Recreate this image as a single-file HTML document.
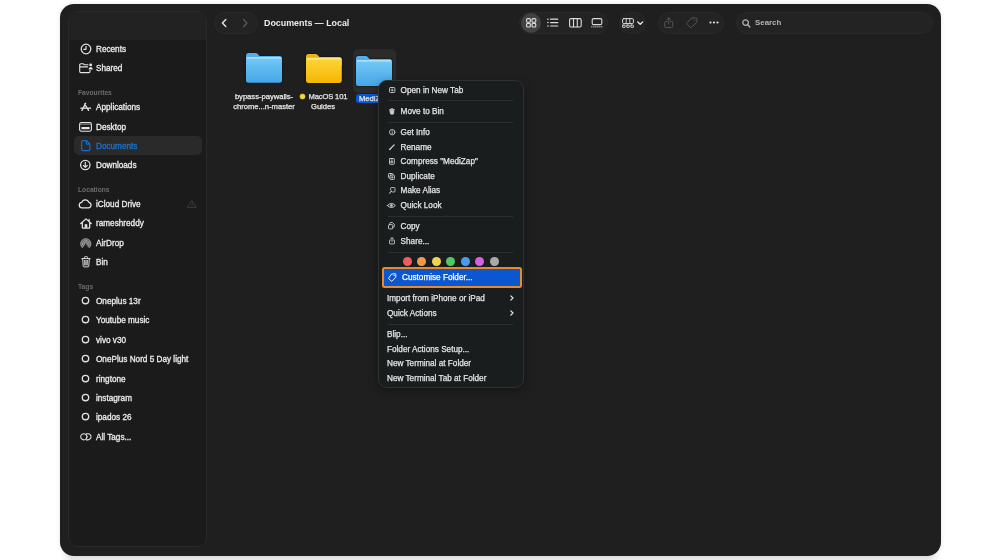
<!DOCTYPE html>
<html><head><meta charset="utf-8">
<style>
*{box-sizing:border-box;margin:0;padding:0}
html,body{width:1001px;height:560px;overflow:hidden;background:#fff;font-family:"Liberation Sans",sans-serif;}
body{position:relative}
.botband{position:absolute;left:60px;top:548px;width:881px;height:12px;background:linear-gradient(90deg,#fff 0,#e9e9e9 12px,#e9e9e9 869px,#fff 881px)}
.win{will-change:transform;position:absolute;left:60px;top:4px;width:881px;height:551.6px;background:#1f1f1f;border-radius:14px;box-shadow:0 0 5px rgba(0,0,0,.10)}
.side{position:absolute;left:8px;top:7px;width:139px;height:536.4px;background:#1b1b1b;border-radius:9px;border:1px solid #292929;overflow:hidden}
.sidehead{position:absolute;left:0;top:0;width:100%;height:28px;background:#222}
.row{position:absolute;left:27px;font-size:8.2px;color:#e8e8e8;white-space:nowrap;line-height:10px;height:10px;-webkit-text-stroke:.32px}
.lab{position:absolute;left:9px;font-size:6.7px;color:#6c6c6c;font-weight:bold;white-space:nowrap;line-height:8px}
.ico{position:absolute;left:10px;width:12px;height:12px}
.sel{position:absolute;left:5px;top:124.4px;width:127.6px;height:18.6px;border-radius:5px;background:#2a2a2a}
svg{display:block;overflow:visible}
.tb{position:absolute;background:#232323;border:1px solid #292929;border-radius:11px;height:22px;top:8px}
.title{position:absolute;left:204px;top:13px;font-size:8.9px;font-weight:bold;color:#ececec;line-height:12px;white-space:nowrap}
.flabel{position:absolute;font-size:7.6px;color:#e8e8e8;line-height:9.7px;text-align:center;white-space:nowrap;-webkit-text-stroke:.25px}
.menu{position:absolute;left:318px;top:76px;width:146px;height:307.6px;background:#1a1d1d;border:1px solid #2f3232;border-radius:9px;box-shadow:0 3px 10px rgba(0,0,0,.35)}
.mi{position:absolute;left:21.6px;font-size:8.2px;color:#e4e4e4;line-height:10px;height:10px;white-space:nowrap;-webkit-text-stroke:.25px}
.mi.ni{left:8px}
.msep{position:absolute;left:9px;width:125px;height:1px;background:#2b2f2f}
.mic{position:absolute;left:9px;width:9px;height:9px}
.dot{position:absolute;top:176.4px;width:8.8px;height:8.8px;border-radius:50%}
.chev{position:absolute;left:130px;width:5px;height:7px}

</style></head><body>
<div class="botband"></div>
<div class="win">
 <div class="side">
  <div class="sidehead"></div>
  <div class="sel"></div>
  <svg style="position:absolute;left:10.6px;top:30.80px" width="12" height="12" viewBox="0 0 12 12" fill="none" stroke="#e0e0e0" stroke-width="1" stroke-linecap="round" stroke-linejoin="round"><circle cx="6" cy="6" r="4.8" stroke-width="1.25"/><path d="M6 3.2V6.3H3.8" stroke-width="1.15"/></svg>
  <svg style="position:absolute;left:9.6px;top:51.10px" width="14" height="10.4" viewBox="0 0 14 10.4" fill="none" stroke="#e4e4e4" stroke-width="1.1" stroke-linecap="round" stroke-linejoin="round"><path d="M.7 2Q.7 .8 1.9 .8H4.4L5.4 1.8H9M.7 2V8.4Q.7 9.6 1.9 9.6H9.8Q11 9.6 11 8.4V7.4M.8 3.9H8.6"/><circle cx="11.7" cy="1.9" r="1.45" fill="#e4e4e4" stroke="none"/><path d="M9.6 6.6Q9.6 4 11.7 4Q13.8 4 13.8 6.6Z" fill="#e4e4e4" stroke="none"/></svg>
  <svg style="position:absolute;left:10.80px;top:90.20px" width="12" height="10" viewBox="0 0 12 10" fill="none" stroke="#e6e6e6" stroke-width="1.3" stroke-linecap="round" stroke-linejoin="round"><path d="M5.6 1.3L2 8.4M4.6 2L8.6 8.4M.9 6.2H6.6M8.4 6.2H10.6"/></svg>
  <svg style="position:absolute;left:10.10px;top:110.00px" width="13" height="9.8" viewBox="0 0 13 9.8" fill="none" stroke="#e4e4e4" stroke-width="1.1" stroke-linecap="round" stroke-linejoin="round"><rect x=".6" y=".6" width="11.8" height="8.6" rx="1.6"/><path d="M.9 2.4H12.1" stroke-width=".7" stroke="#9a9a9a"/><rect x="2.4" y="4.9" width="8.2" height="2.4" rx=".6" fill="#e4e4e4" stroke="none"/></svg>
  <svg style="position:absolute;left:11.5px;top:128.00px" width="9.6" height="11.4" viewBox="0 0 9.6 11.4" fill="none" stroke="#e0e0e0" stroke-width="1" stroke-linecap="round" stroke-linejoin="round"><path d="M1.8 .7H5.6L8.9 4V9.6Q8.9 10.7 7.8 10.7H1.8Q.7 10.7 .7 9.6V1.8Q.7 .7 1.8 .7ZM5.4 .9V3.2Q5.4 4.2 6.4 4.2H8.7" stroke="#186ec4" stroke-width="1.15"/></svg>
  <svg style="position:absolute;left:10.4px;top:147.00px" width="12" height="12" viewBox="0 0 12 12" fill="none" stroke="#e0e0e0" stroke-width="1" stroke-linecap="round" stroke-linejoin="round"><circle cx="6.3" cy="6" r="4.7" stroke-width="1.3"/><path d="M6.3 3.4V8.2M4.4 6.5L6.3 8.4L8.2 6.5" stroke-width="1.15"/></svg>
  <svg style="position:absolute;left:8.9px;top:186.5px" width="14" height="9.6" viewBox="0 0 14 9.6" fill="none" stroke="#e4e4e4" stroke-width="1.25" stroke-linecap="round" stroke-linejoin="round"><path d="M3.6 8.8H10.4A2.75 2.75 0 0 0 10.8 3.35A3.7 3.7 0 0 0 3.8 3.3A2.77 2.77 0 0 0 3.6 8.8Z"/></svg>
  <svg style="position:absolute;left:10.60px;top:206.20px" width="12" height="10.8" viewBox="0 0 12 10.8" fill="none" stroke="#e4e4e4" stroke-width="1.25" stroke-linecap="round" stroke-linejoin="round"><path d="M.8 5.5L6 .9L11.2 5.5M2.3 4.6V9.4Q2.3 10.1 3 10.1H9Q9.7 10.1 9.7 9.4V4.6M9.1 1.5V3.2"/><rect x="4.7" y="6.2" width="2.6" height="3.6" fill="#e4e4e4" stroke="none"/></svg>
  <svg style="position:absolute;left:10.7px;top:225.8px" width="11.6" height="10.8" viewBox="0 0 11.6 10.8" fill="none" stroke-linecap="round"><path d="M2.6 10.1A5.3 5.3 0 1 1 9 10.1L5.8 5.6Z" fill="#6a6a6a"/><g stroke="#a4a4a4" stroke-width=".8" fill="none"><path d="M2.4 9.8A5.2 5.2 0 1 1 9.2 9.8"/><path d="M3.5 8.4A3.4 3.4 0 1 1 8.1 8.4"/><path d="M4.6 6.9A1.7 1.7 0 1 1 7 6.9"/></g></svg>
  <svg style="position:absolute;left:11.5px;top:244.10px" width="10" height="11.6" viewBox="0 0 10 11.6" fill="none" stroke="#e0e0e0" stroke-width="1" stroke-linecap="round" stroke-linejoin="round"><path d="M.8 2.6H9.2M3.4 2.4V1.4Q3.4 .7 4.1 .7H5.9Q6.6 .7 6.6 1.4V2.4M1.7 2.8L2.2 10Q2.3 10.9 3.1 10.9H6.9Q7.7 10.9 7.8 10L8.3 2.8M3.7 4.4L3.8 9M5 4.4V9M6.3 4.4L6.2 9" stroke-width=".95"/></svg>
  <svg style="position:absolute;left:117.5px;top:187.60px" width="10" height="8.4" viewBox="0 0 10 8.4" fill="none" stroke="#e0e0e0" stroke-width="1" stroke-linecap="round" stroke-linejoin="round"><path d="M5 .9L9.3 7.6H.7Z" stroke="#3c3c3c" stroke-width="1"/><path d="M5 3.3V5.4M5 6.5V6.6" stroke="#3c3c3c" stroke-width=".9"/></svg>
  <svg style="position:absolute;left:11.8px;top:284.10px" width="9" height="9" viewBox="0 0 9 9" fill="none" stroke="#e0e0e0" stroke-width="1" stroke-linecap="round" stroke-linejoin="round"><circle cx="4.5" cy="4.5" r="3.2" stroke-width="1.35"/></svg>
  <svg style="position:absolute;left:11.8px;top:303.45px" width="9" height="9" viewBox="0 0 9 9" fill="none" stroke="#e0e0e0" stroke-width="1" stroke-linecap="round" stroke-linejoin="round"><circle cx="4.5" cy="4.5" r="3.2" stroke-width="1.35"/></svg>
  <svg style="position:absolute;left:11.8px;top:322.80px" width="9" height="9" viewBox="0 0 9 9" fill="none" stroke="#e0e0e0" stroke-width="1" stroke-linecap="round" stroke-linejoin="round"><circle cx="4.5" cy="4.5" r="3.2" stroke-width="1.35"/></svg>
  <svg style="position:absolute;left:11.8px;top:342.20px" width="9" height="9" viewBox="0 0 9 9" fill="none" stroke="#e0e0e0" stroke-width="1" stroke-linecap="round" stroke-linejoin="round"><circle cx="4.5" cy="4.5" r="3.2" stroke-width="1.35"/></svg>
  <svg style="position:absolute;left:11.8px;top:361.60px" width="9" height="9" viewBox="0 0 9 9" fill="none" stroke="#e0e0e0" stroke-width="1" stroke-linecap="round" stroke-linejoin="round"><circle cx="4.5" cy="4.5" r="3.2" stroke-width="1.35"/></svg>
  <svg style="position:absolute;left:11.8px;top:381.00px" width="9" height="9" viewBox="0 0 9 9" fill="none" stroke="#e0e0e0" stroke-width="1" stroke-linecap="round" stroke-linejoin="round"><circle cx="4.5" cy="4.5" r="3.2" stroke-width="1.35"/></svg>
  <svg style="position:absolute;left:11.8px;top:400.35px" width="9" height="9" viewBox="0 0 9 9" fill="none" stroke="#e0e0e0" stroke-width="1" stroke-linecap="round" stroke-linejoin="round"><circle cx="4.5" cy="4.5" r="3.2" stroke-width="1.35"/></svg>
  <svg style="position:absolute;left:10.5px;top:420.50px" width="11.6" height="7.6" viewBox="0 0 11.6 7.6" fill="none" stroke="#e0e0e0" stroke-width="1" stroke-linecap="round" stroke-linejoin="round"><circle cx="3.8" cy="3.8" r="3.1" stroke-width="1.05"/><path d="M6.4 .7H7.9A3.1 3.1 0 0 1 7.9 6.9H6.4" stroke-width="1.05"/><path d="M6.2 1.4A3.4 3.4 0 0 1 6.2 6.2" stroke-width=".9"/></svg>
  <div class="row" style="top:33px">Recents</div>
  <div class="row" style="top:52px">Shared</div>
  <div class="lab" style="top:77px">Favourites</div>
  <div class="row" style="top:91px">Applications</div>
  <div class="row" style="top:111px">Desktop</div>
  <div class="row" style="top:130px;color:#1a72cc">Documents</div>
  <div class="row" style="top:149px">Downloads</div>
  <div class="lab" style="top:174px">Locations</div>
  <div class="row" style="top:188px">iCloud Drive</div>
  <div class="row" style="top:207px">rameshreddy</div>
  <div class="row" style="top:227px">AirDrop</div>
  <div class="row" style="top:246px">Bin</div>
  <div class="lab" style="top:271px">Tags</div>
  <div class="row" style="top:285px">Oneplus 13r</div>
  <div class="row" style="top:304px">Youtube music</div>
  <div class="row" style="top:324px">vivo v30</div>
  <div class="row" style="top:343px">OnePlus Nord 5 Day light</div>
  <div class="row" style="top:363px">ringtone</div>
  <div class="row" style="top:382px">instagram</div>
  <div class="row" style="top:401px">ipados 26</div>
  <div class="row" style="top:421px">All Tags...</div>
 </div>

 <!-- toolbar -->
 <div class="tb" style="left:154px;width:44px"></div>
 <svg style="position:absolute;left:160px;top:13px" width="32" height="12" viewBox="0 0 32 12"><path d="M5.8 2.4 L2.4 6 L5.8 9.6" fill="none" stroke="#e4e4e4" stroke-width="1.4" stroke-linecap="round" stroke-linejoin="round"/><path d="M23.6 2.4 L27 6 L23.6 9.6" fill="none" stroke="#565656" stroke-width="1.4" stroke-linecap="round" stroke-linejoin="round"/></svg>
 <div class="title">Documents — Local</div>
 <div class="tb" style="left:459px;width:89px"></div>
 <div style="position:absolute;left:461px;top:9px;width:20px;height:20px;border-radius:50%;background:#424242"></div>
 <div class="tb" style="left:559px;width:27px"></div>
 <div class="tb" style="left:598px;width:66px"></div>
 <div class="tb" style="left:676px;width:196.5px"></div>
 <div style="position:absolute;left:695px;top:14px;font-size:7.9px;font-weight:bold;color:#b4b4b4;line-height:10px">Search</div>
 <svg style="position:absolute;left:465.6px;top:14.0px" width="10.4" height="9.6" viewBox="0 0 10.4 9.6" fill="none" stroke="#dcdcdc" stroke-width="1.1" stroke-linecap="round" stroke-linejoin="round"><rect x=".6" y=".6" width="3.8" height="3.6" rx="1"/><rect x="6" y=".6" width="3.8" height="3.6" rx="1"/><rect x=".6" y="5.4" width="3.8" height="3.6" rx="1"/><rect x="6" y="5.4" width="3.8" height="3.6" rx="1"/></svg>
 <svg style="position:absolute;left:487.0px;top:14.4px" width="11.6" height="9.2" viewBox="0 0 11.6 9.2" fill="none" stroke="#dcdcdc" stroke-width="1" stroke-linecap="round" stroke-linejoin="round"><path d="M3.6 1.2H10.8M3.6 4.6H10.8M3.6 8H10.8" stroke-width="1.2"/><path d="M.9 1.2H1M.9 4.6H1M.9 8H1" stroke-width="1.5"/></svg>
 <svg style="position:absolute;left:508.8px;top:14.0px" width="12.8" height="9.6" viewBox="0 0 12.8 9.6" fill="none" stroke="#dcdcdc" stroke-width="1.1" stroke-linecap="round" stroke-linejoin="round"><rect x=".6" y=".6" width="11.6" height="8.4" rx="1.4"/><path d="M4.5 .8V8.8M8.3 .8V8.8"/></svg>
 <svg style="position:absolute;left:531.0px;top:14.0px" width="12.0" height="9.6" viewBox="0 0 12.0 9.6" fill="none" stroke="#dcdcdc" stroke-width="1" stroke-linecap="round" stroke-linejoin="round"><rect x="1.2" y=".6" width="9.6" height="6" rx="1.4" stroke-width="1.1"/><path d="M.8 8.8H11.2" stroke-width="1.3" stroke-dasharray=".1 1.9"/></svg>
 <svg style="position:absolute;left:562.4px;top:13.8px" width="12.0" height="10.0" viewBox="0 0 12.0 10.0" fill="none" stroke="#dcdcdc" stroke-width="1" stroke-linecap="round" stroke-linejoin="round"><rect x=".6" y=".6" width="10.8" height="5" rx="1.2" stroke-width="1"/><path d="M4.2 .8V5.4M7.8 .8V5.4" stroke-width=".9"/><rect x=".6" y="7.1" width="2.5" height="2.3" rx=".3" stroke-width=".9"/><rect x="4.75" y="7.1" width="2.5" height="2.3" rx=".3" stroke-width=".9"/><rect x="8.9" y="7.1" width="2.5" height="2.3" rx=".3" stroke-width=".9"/></svg>
 <svg style="position:absolute;left:577.0px;top:17.0px" width="6.4" height="4.0" viewBox="0 0 6.4 4.0" fill="none" stroke="#e4e4e4" stroke-width="1" stroke-linecap="round" stroke-linejoin="round"><path d="M.8 .9L3.2 3.2L5.6 .9" stroke-width="1.4"/></svg>
 <svg style="position:absolute;left:604.0px;top:12.8px" width="9.4" height="11.2" viewBox="0 0 9.4 11.2" fill="none" stroke="#555" stroke-width="1" stroke-linecap="round" stroke-linejoin="round"><path d="M3 4.6H1.8Q.7 4.6 .7 5.7V9.4Q.7 10.5 1.8 10.5H7.6Q8.7 10.5 8.7 9.4V5.7Q8.7 4.6 7.6 4.6H6.4M4.7 7V.9M2.8 2.6L4.7 .8L6.6 2.6"/></svg>
 <svg style="position:absolute;left:626.2px;top:13.4px" width="11.8" height="10.6" viewBox="0 0 11.8 10.6" fill="none" stroke="#555" stroke-width="1" stroke-linecap="round" stroke-linejoin="round"><path d="M5.6 1.2L9.4 .8Q10.9 .7 11 2.2L10.6 5.6L5.6 10.2Q4.8 10.9 4 10.1L1.2 7.3Q.4 6.5 1.2 5.7Z"/><circle cx="8.6" cy="3.1" r=".7" fill="#555" stroke="none"/></svg>
 <svg style="position:absolute;left:649.0px;top:17.4px" width="10.0" height="3.0" viewBox="0 0 10.0 3.0" fill="none" stroke="#dcdcdc" stroke-width="1" stroke-linecap="round" stroke-linejoin="round"><circle cx="1.5" cy="1.5" r="1.1" fill="#e2e2e2" stroke="none"/><circle cx="5" cy="1.5" r="1.1" fill="#e2e2e2" stroke="none"/><circle cx="8.5" cy="1.5" r="1.1" fill="#e2e2e2" stroke="none"/></svg>
 <svg style="position:absolute;left:682.0px;top:14.6px" width="8.6" height="8.8" viewBox="0 0 8.6 8.8" fill="none" stroke="#b0b0b0" stroke-width="1" stroke-linecap="round" stroke-linejoin="round"><circle cx="3.6" cy="3.6" r="2.8" stroke-width="1.3"/><path d="M5.8 5.8L7.8 7.9" stroke-width="1.5"/></svg>
 <!-- folders -->
 <svg style="position:absolute;left:186px;top:48.6px;filter:drop-shadow(0 0 .8px rgba(0,10,20,.8))" width="36" height="29.8" viewBox="0 0 36 30" preserveAspectRatio="none"><defs><linearGradient id="gb186" x1="0" y1="0" x2="0" y2="1"><stop offset="0" stop-color="#74c9f7"/><stop offset="1" stop-color="#45a6e6"/></linearGradient></defs><path d="M0 2.5 Q0 0 2.5 0 H9.5 Q11 0 12 1.2 L13.5 3 H33.5 Q36 3 36 5.5 V12 H0 Z" fill="#52aeea"/><rect x="0" y="4" width="36" height="26" rx="2.2" fill="url(#gb186)"/><rect x=".8" y="4.2" width="34.4" height="1.4" rx=".6" fill="#bde8fc"/></svg>
 <svg style="position:absolute;left:245.6px;top:49.7px;filter:drop-shadow(0 0 .8px rgba(0,0,0,.7))" width="35.8" height="29" viewBox="0 0 36 30" preserveAspectRatio="none"><defs><linearGradient id="gy245.5" x1="0" y1="0" x2="0" y2="1"><stop offset="0" stop-color="#fdd63a"/><stop offset="1" stop-color="#f4b602"/></linearGradient></defs><path d="M0 2.5 Q0 0 2.5 0 H9.5 Q11 0 12 1.2 L13.5 3 H33.5 Q36 3 36 5.5 V12 H0 Z" fill="#e8b21c"/><rect x="0" y="4" width="36" height="26" rx="2.2" fill="url(#gy245.5)"/><rect x=".8" y="4.2" width="34.4" height="1.4" rx=".6" fill="#ffe680"/></svg>
 <div class="flabel" style="left:170px;top:87.6px;width:68px">bypass-paywalls-</div>
 <div class="flabel" style="left:170px;top:98px;width:68px">chrome...n-master</div>
 <div style="position:absolute;left:239.6px;top:89.6px;width:5.8px;height:5.8px;border-radius:50%;background:#f3d548;box-shadow:0 0 0 .5px #8a7a30"></div>
 <div class="flabel" style="left:248.6px;top:87.6px;letter-spacing:-.15px">MacOS 101</div>
 <div class="flabel" style="left:243px;top:98px;width:40px">Guides</div>
 <div style="position:absolute;left:292.6px;top:45.4px;width:43.4px;height:43.2px;border-radius:5px;background:#2b2b2b"></div>
 <svg style="position:absolute;left:296.2px;top:52.2px;filter:drop-shadow(0 0 .8px rgba(0,10,20,.8))" width="36" height="30" viewBox="0 0 36 30" preserveAspectRatio="none"><defs><linearGradient id="gb3" x1="0" y1="0" x2="0" y2="1"><stop offset="0" stop-color="#74c9f7"/><stop offset="1" stop-color="#45a6e6"/></linearGradient></defs><path d="M0 2.5 Q0 0 2.5 0 H9.5 Q11 0 12 1.2 L13.5 3 H33.5 Q36 3 36 5.5 V12 H0 Z" fill="#52aeea"/><rect x="0" y="4" width="36" height="26" rx="2.2" fill="url(#gb3)"/><rect x=".8" y="4.2" width="34.4" height="1.4" rx=".6" fill="#bde8fc"/></svg>
 <div style="position:absolute;left:295.6px;top:90px;width:31px;height:9.4px;border-radius:3px;background:#0a56cf"></div>
 <div class="flabel" style="left:299px;top:90px;text-align:left">MediZap</div>
 <!-- context menu -->
 <div class="menu">
  <div class="mi" style="top:5px">Open in New Tab</div>
  <div class="msep" style="top:19px"></div>
  <div class="mi" style="top:26px">Move to Bin</div>
  <div class="msep" style="top:41px"></div>
  <div class="mi" style="top:47px">Get Info</div>
  <div class="mi" style="top:62px">Rename</div>
  <div class="mi" style="top:76px">Compress "MediZap"</div>
  <div class="mi" style="top:91px">Duplicate</div>
  <div class="mi" style="top:105px">Make Alias</div>
  <div class="mi" style="top:120px">Quick Look</div>
  <div class="msep" style="top:135px"></div>
  <div class="mi" style="top:141px">Copy</div>
  <div class="mi" style="top:156px">Share...</div>
  <div class="msep" style="top:171px"></div>
  <div class="dot" style="left:24px;background:#ee5c5c"></div>
  <div class="dot" style="left:38px;background:#f0994f"></div>
  <div class="dot" style="left:53px;background:#f2d24e"></div>
  <div class="dot" style="left:67px;background:#52c864"></div>
  <div class="dot" style="left:82px;background:#4a9cf0"></div>
  <div class="dot" style="left:96px;background:#d262e0"></div>
  <div class="dot" style="left:111px;background:#a9a9a9"></div>
  <div style="position:absolute;left:2.6px;top:186.2px;width:140.6px;height:21.2px;border:2px solid #e8892c;border-radius:2.5px;background:#0a57d0"></div>
  <div class="mi" style="top:192px;left:23px;color:#fff">Customise Folder...</div>
  <svg style="position:absolute;left:9.6px;top:6.0px" width="6.4" height="6.0" viewBox="0 0 6.4 6.0" fill="none" stroke="#cfcfcf" stroke-width="0.9" stroke-linecap="round" stroke-linejoin="round"><rect x=".5" y=".5" width="5.4" height="5" rx="1"/><path d="M3.2 1.9V4.1M2.1 3H4.3" stroke-width=".8"/></svg>
  <svg style="position:absolute;left:9.8px;top:27.2px" width="6.0" height="6.6" viewBox="0 0 6.0 6.6" fill="none" stroke="#cfcfcf" stroke-width="0.9" stroke-linecap="round" stroke-linejoin="round"><path d="M.5 1.5H5.5M2 1.4V.9Q2 .5 2.4 .5H3.6Q4 .5 4 .9V1.4" stroke-width=".8"/><path d="M1 2.2H5L4.7 5.6Q4.6 6.2 4 6.2H2Q1.4 6.2 1.3 5.6Z" fill="#cfcfcf" stroke-width=".6"/></svg>
  <svg style="position:absolute;left:9.7px;top:48.1px" width="6.4" height="6.4" viewBox="0 0 6.4 6.4" fill="none" stroke="#cfcfcf" stroke-width="0.9" stroke-linecap="round" stroke-linejoin="round"><circle cx="3.2" cy="3.2" r="2.7"/><path d="M3.2 3V4.6M3.2 1.8V1.85" stroke-width=".9"/></svg>
  <svg style="position:absolute;left:9.8px;top:63.0px" width="6.2" height="6.0" viewBox="0 0 6.2 6.0" fill="none" stroke="#cfcfcf" stroke-width="0.9" stroke-linecap="round" stroke-linejoin="round"><path d="M.8 5.3L5.2 .9" stroke-width="1.3"/><path d="M.5 5.6L1.4 5.3" stroke-width=".8"/></svg>
  <svg style="position:absolute;left:10.0px;top:77.2px" width="5.8" height="6.8" viewBox="0 0 5.8 6.8" fill="none" stroke="#cfcfcf" stroke-width="0.9" stroke-linecap="round" stroke-linejoin="round"><rect x=".5" y=".5" width="4.8" height="5.8" rx=".6"/><path d="M2.9 .6V3.2M2.1 3.4H3.7V4.7H2.1Z" stroke-width=".8"/></svg>
  <svg style="position:absolute;left:9.4px;top:91.6px" width="6.8" height="7.0" viewBox="0 0 6.8 7.0" fill="none" stroke="#cfcfcf" stroke-width="0.9" stroke-linecap="round" stroke-linejoin="round"><rect x=".5" y=".5" width="4.4" height="4.4" rx=".8"/><rect x="2" y="2.1" width="4.4" height="4.4" rx=".8" fill="#1a1d1d"/><path d="M4.2 3.3V5.3M3.2 4.3H5.2" stroke-width=".8"/></svg>
  <svg style="position:absolute;left:9.6px;top:106.2px" width="6.6" height="6.8" viewBox="0 0 6.6 6.8" fill="none" stroke="#cfcfcf" stroke-width="0.9" stroke-linecap="round" stroke-linejoin="round"><path d="M1.6 2.6V1.2Q1.6 .6 2.2 .6H5.4Q6 .6 6 1.2V4.4Q6 5 5.4 5H3.6M.6 6.3Q.7 4.3 2.7 4.2M1.7 3.2L2.8 4.2L1.7 5.3" stroke-width=".85"/></svg>
  <svg style="position:absolute;left:8.4px;top:121.8px" width="8.8" height="5.0" viewBox="0 0 8.8 5.0" fill="none" stroke="#cfcfcf" stroke-width="0.9" stroke-linecap="round" stroke-linejoin="round"><path d="M.5 2.5Q2.2 .5 4.4 .5Q6.6 .5 8.3 2.5Q6.6 4.5 4.4 4.5Q2.2 4.5 .5 2.5Z" stroke-width="1"/><circle cx="4.4" cy="2.5" r="1.35" fill="#cfcfcf" stroke="none"/></svg>
  <svg style="position:absolute;left:9.4px;top:141.2px" width="6.8" height="7.4" viewBox="0 0 6.8 7.4" fill="none" stroke="#cfcfcf" stroke-width="0.9" stroke-linecap="round" stroke-linejoin="round"><path d="M1.8 2.4V1.4Q1.8 .5 2.7 .5H4.4L6.3 2.4V4.4Q6.3 5.3 5.4 5.3H5"/><rect x=".5" y="2.6" width="4.3" height="4.3" rx=".9"/></svg>
  <svg style="position:absolute;left:9.6px;top:156.2px" width="6.0" height="7.4" viewBox="0 0 6.0 7.4" fill="none" stroke="#cfcfcf" stroke-width="0.9" stroke-linecap="round" stroke-linejoin="round"><path d="M1.7 3.1H.9Q.5 3.1 .5 3.5V6.5Q.5 6.9 .9 6.9H5.1Q5.5 6.9 5.5 6.5V3.5Q5.5 3.1 5.1 3.1H4.3M3 4.7V.8M1.7 1.9L3 .6L4.3 1.9" stroke-width=".85"/></svg>
  <svg style="position:absolute;left:8.6px;top:191.6px" width="8.4" height="9.0" viewBox="0 0 8.4 9.0" fill="none" stroke="#fff" stroke-width="0.9" stroke-linecap="round" stroke-linejoin="round"><path d="M4 1L7 .7Q7.8 .6 7.9 1.4L7.7 4.4L4.2 8Q3.6 8.5 3 7.9L.9 5.8Q.3 5.2 .9 4.6Z" stroke-width=".95"/><circle cx="6.2" cy="2.4" r=".55" fill="#fff" stroke="none"/></svg>
  <svg style="position:absolute;left:130.6px;top:214.2px" width="3.8" height="6.0" viewBox="0 0 3.8 6.0" fill="none" stroke="#e8e8e8" stroke-width="0.9" stroke-linecap="round" stroke-linejoin="round"><path d="M.8 .8L3 3L.8 5.2" stroke-width="1.2"/></svg>
  <svg style="position:absolute;left:130.6px;top:229.0px" width="3.8" height="6.0" viewBox="0 0 3.8 6.0" fill="none" stroke="#e8e8e8" stroke-width="0.9" stroke-linecap="round" stroke-linejoin="round"><path d="M.8 .8L3 3L.8 5.2" stroke-width="1.2"/></svg>
  <div class="mi ni" style="top:213px">Import from iPhone or iPad</div>
  <div class="mi ni" style="top:228px">Quick Actions</div>
  <div class="msep" style="top:243px"></div>
  <div class="mi ni" style="top:249px">Blip...</div>
  <div class="mi ni" style="top:264px">Folder Actions Setup...</div>
  <div class="mi ni" style="top:278px">New Terminal at Folder</div>
  <div class="mi ni" style="top:293px">New Terminal Tab at Folder</div>
 </div>
</div>
</body></html>
